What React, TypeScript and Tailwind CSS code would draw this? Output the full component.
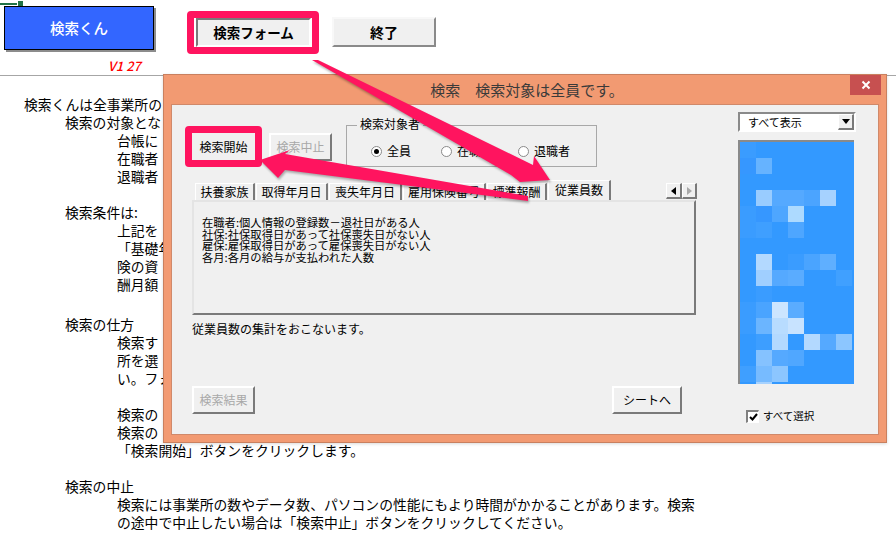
import React from "react";

const FONT = "[font-family:'Noto_Sans_CJK_JP','Liberation_Sans',sans-serif]";

const LINES: { t: string; i: number; top?: number }[] = [
  { t: "検索くんは全事業所の", i: 24 },
  { t: "検索の対象とな", i: 65 },
  { t: "台帳に", i: 117 },
  { t: "在職者", i: 117 },
  { t: "退職者", i: 117 },
  { t: "検索条件は:", i: 65, top: 18 },
  { t: "上記を", i: 117 },
  { t: "「基礎年", i: 117 },
  { t: "険の資", i: 117 },
  { t: "酬月額", i: 117 },
  { t: "検索の仕方", i: 65, top: 22 },
  { t: "検索す", i: 117 },
  { t: "所を選", i: 117 },
  { t: "い。フォ", i: 117 },
  { t: "検索の", i: 117, top: 18 },
  { t: "検索の", i: 117 },
  { t: "「検索開始」ボタンをクリックします。", i: 117 },
  { t: "検索の中止", i: 65, top: 18 },
  { t: "検索には事業所の数やデータ数、パソコンの性能にもより時間がかかることがあります。検索", i: 117 },
  { t: "の途中で中止したい場合は「検索中止」ボタンをクリックしてください。", i: 117 },
];

const B = "#3399ff";
const MOSAIC: string[][] = [
  ["#3a9cff", B, B, B, B, B, B],
  ["#3697ff", "#66b3ff", B, B, B, B, B],
  [B, B, B, B, B, B, B],
  [B, "#99ccff", "#55a9ff", "#55a9ff", "#4ba4ff", "#a6d2ff", B],
  ["#3a9cff", "#3697ff", "#4ea6ff", "#addaff", B, B, B],
  ["#3a9cff", "#3f9fff", B, "#4ea6ff", B, B, B],
  [B, B, B, B, B, B, B],
  [B, "#b3d9ff", B, "#3a9cff", "#4aa4ff", "#5fafff", B],
  [B, "#a0cfff", "#55a9ff", "#5aacff", B, B, "#40a0ff"],
  [B, "#3a9cff", B, B, B, B, B],
  ["#3a9cff", "#4aa4ff", "#cce5ff", "#5aacff", B, B, B],
  ["#3a9cff", "#6bb5ff", "#b8dcff", "#c8e3ff", B, B, B],
  [B, "#3d9eff", "#b3d9ff", B, "#b3d9ff", "#55a9ff", "#8cc6ff"],
  [B, "#85c2ff", "#55a9ff", "#50a7ff", B, B, B],
  ["#3f9fff", "#77bbff", "#8cc6ff", B, B, B, B],
];

const BTN =
  "flex items-center justify-center bg-[#f0f0f0] border-2 border-t-white border-l-white border-r-[#7a7a7a] border-b-[#7a7a7a] text-[12px] leading-none";

const TABS = [
  { t: "扶養家族", w: 60 },
  { t: "取得年月日", w: 72 },
  { t: "喪失年月日", w: 73 },
  { t: "雇用保険番号", w: 83 },
  { t: "標準報酬", w: 60 },
];

function Radio({ checked }: { checked?: boolean }) {
  return (
    <span className="flex h-[11px] w-[11px] items-center justify-center rounded-full border border-[#8a8a8a] bg-white">
      {checked && <span className="h-[5px] w-[5px] rounded-full bg-black" />}
    </span>
  );
}

export default function App() {
  return (
    <div className={`relative h-[533px] w-[896px] overflow-hidden bg-white text-black ${FONT}`}>
      {/* sheet cell selection marks */}
      <div className="flex h-[6px] items-start">
        <div className="mt-[3px] h-[2px] w-[17px] bg-[#217346]" />
        <div className="mt-[1px] ml-[1px] h-[5px] w-[5px] bg-[#217346]" />
      </div>

      {/* header */}
      <div className="flex h-[70px] items-start border-b border-[#a6a6a6] pl-[4px]">
        <div className="flex w-[150px] flex-col">
          <div className="flex h-[44px] items-center justify-center border border-black bg-[#3366ff] text-[14.5px] font-medium text-white shadow-[2px_2px_0_#8c8c8c]">
            検索くん
          </div>
          <div className="mt-[9px] pr-[13px] text-right text-[13px] leading-[14px] font-medium text-[#ff0000] italic">
            V1 27
          </div>
        </div>
        <div className="mt-[5px] ml-[33px] h-[43px] w-[132px] rounded-[4px] border-[7px] border-[#ff145f] bg-white">
          <div className="ml-[2px] flex h-[29px] w-[115px] items-center justify-center border-2 border-t-[#7a7a7a] border-r-[#ffffff] border-b-[#ffffff] border-l-[#7a7a7a] bg-[#f0f0f0] text-[13.5px] font-bold">
            検索フォーム
          </div>
        </div>
        <div className="mt-[11px] ml-[13px] flex h-[30px] w-[104px] items-center justify-center border-2 border-t-[#f8f8f8] border-r-[#8a8a8a] border-b-[#8a8a8a] border-l-[#f8f8f8] bg-[#f0f0f0] text-[14px] font-bold">
          終了
        </div>
      </div>

      {/* document text */}
      <div className="pt-[19px] text-[13.8px] leading-[18px]">
        {LINES.map((l, i) => (
          <div
            key={i}
            className={`whitespace-nowrap ${
              l.i === 24 ? "pl-[24px]" : l.i === 65 ? "pl-[65px]" : "pl-[117px]"
            } ${l.top === 18 ? "mt-[18px]" : l.top === 22 ? "mt-[22px]" : ""}`}
          >
            {l.t}
          </div>
        ))}
      </div>

      {/* dialog window */}
      <div className="absolute top-[74px] left-[163px] flex h-[369px] w-[724px] flex-col border border-[#c9805f] bg-[#f29a72] shadow-[0_1px_3px_rgba(0,0,0,0.15)]">
        <div className="flex h-[29px] shrink-0 items-start">
          <div className="flex h-[30px] flex-1 items-center justify-center pl-[40px] text-[15px] whitespace-pre text-[#3a3a3a]">
            検索　検索対象は全員です。
          </div>
          <div className="mr-[5px] flex h-[20px] w-[31px] items-center justify-center bg-[#c75050]">
            <svg width="10" height="10" viewBox="0 0 10 10">
              <path d="M1.5 1.5 L8.5 8.5 M8.5 1.5 L1.5 8.5" stroke="#fff" strokeWidth="2" />
            </svg>
          </div>
        </div>

        <div className="mx-[7px] flex h-[331px] border border-[#d0896a] bg-[#f0f0f0] text-[12px]">
          {/* left column */}
          <div className="ml-[13px] flex w-[511px] flex-col">
            <div className="mt-[20px] flex h-[43px] items-start">
              <div className="mt-[1px] flex h-[41px] w-[77px] items-center justify-center rounded-[4px] border-[7px] border-[#ff145f] bg-[#f0f0f0] text-[12px]">
                検索開始
              </div>
              <div className={`${BTN} mt-[8px] ml-[7px] h-[28px] w-[63px] text-[#a8a8a8]`}>検索中止</div>
              <div className="relative ml-[14px] flex h-[42px] w-[251px] items-end gap-[6px] border border-[#a8a8a8] pb-[8px] pl-[24px]">
                <div className="absolute -top-[9px] left-[10px] bg-[#f0f0f0] px-[3px] text-[12px] leading-[14px]">
                  検索対象者
                </div>
                <div className="flex w-[64px] items-center gap-[5px]">
                  <Radio checked />
                  <span className="leading-[14px]">全員</span>
                </div>
                <div className="flex w-[71px] items-center gap-[5px]">
                  <Radio />
                  <span className="leading-[14px]">在職者</span>
                </div>
                <div className="flex items-center gap-[5px]">
                  <Radio />
                  <span className="leading-[14px]">退職者</span>
                </div>
              </div>
            </div>

            {/* tab strip */}
            <div className="mt-[12px] flex h-[20px] items-end pl-[10px]">
              {TABS.map((x, i) => (
                <div
                  key={i}
                  style={{ width: x.w }}
                  className="mr-[1px] flex h-[17px] shrink-0 items-center justify-center border-t border-r-2 border-l border-t-white border-r-[#7a7a7a] border-l-white text-[12px] leading-none whitespace-nowrap"
                >
                  {x.t}
                </div>
              ))}
              <div className="flex h-[20px] w-[63px] shrink-0 items-center justify-center border-t border-r-2 border-l border-t-white border-r-[#7a7a7a] border-l-white pb-[2px] text-[12px] leading-none">
                従業員数
              </div>
              <div className="mb-[1px] ml-[55px] flex h-[16px] w-[31px] shrink-0">
                <div className="flex w-[16px] items-center justify-center border border-r-2 border-b-2 border-white border-r-[#7a7a7a] border-b-[#7a7a7a] bg-[#f0f0f0]">
                  <svg width="6" height="8" viewBox="0 0 6 8">
                    <path d="M5 0 L0 4 L5 8 Z" fill="#000" />
                  </svg>
                </div>
                <div className="flex w-[15px] items-center justify-center border border-r-2 border-b-2 border-white border-r-[#7a7a7a] border-b-[#7a7a7a] bg-[#f0f0f0]">
                  <svg width="6" height="8" viewBox="0 0 6 8">
                    <path d="M1 0 L6 4 L1 8 Z" fill="#a8a8a8" />
                  </svg>
                </div>
              </div>
            </div>

            {/* tab panel */}
            <div className="ml-[7px] h-[115px] w-[504px] border-2 border-t-[#e4e4e4] border-r-[#7a7a7a] border-b-[#7a7a7a] border-l-[#e4e4e4] pt-[15px] pl-[8px] text-[11.3px] leading-[11.7px]">
              <div>在職者:個人情報の登録数－退社日がある人</div>
              <div>社保:社保取得日があって社保喪失日がない人</div>
              <div>雇保:雇保取得日があって雇保喪失日がない人</div>
              <div>各月:各月の給与が支払われた人数</div>
            </div>
            <div className="mt-[7px] ml-[7px] text-[12px] leading-[14px]">従業員数の集計をおこないます。</div>

            <div className="mt-[50px] ml-[7px] flex w-[490px] justify-between">
              <div className={`${BTN} h-[28px] w-[63px] text-[#a8a8a8]`}>検索結果</div>
              <div className={`${BTN} h-[28px] w-[70px] text-[11px]`}>シートへ</div>
            </div>
          </div>

          {/* right column */}
          <div className="mt-[7px] ml-[42px] flex w-[118px] flex-col">
            <div className="flex h-[20px] border-2 border-t-[#8a8a8a] border-r-white border-b-white border-l-[#8a8a8a] bg-white">
              <div className="flex-1 pl-[8px] text-[11px] leading-[16px]">すべて表示</div>
              <div className="flex w-[16px] items-center justify-center border border-r-2 border-b-2 border-white border-r-[#7a7a7a] border-b-[#7a7a7a] bg-[#f0f0f0]">
                <svg width="8" height="5" viewBox="0 0 8 5">
                  <path d="M0 0 L8 0 L4 5 Z" fill="#000" />
                </svg>
              </div>
            </div>
            <div className="mt-[8px] h-[244px] w-[116px] overflow-hidden border-t-2 border-l-2 border-t-[#8a8a8a] border-l-[#8a8a8a] bg-[#3399ff]">
              {MOSAIC.map((row, r) => (
                <div key={r} className="flex h-[16px]">
                  {row.map((c, k) => (
                    <div key={k} className="h-[16px] w-[16px] shrink-0" style={{ backgroundColor: c }} />
                  ))}
                </div>
              ))}
              <div className="ml-[16px] h-[2px] w-[16px] bg-[#a6d2ff]" />
            </div>
            <div className="mt-[25px] ml-[8px] flex items-center gap-[4px]">
              <div className="flex h-[13px] w-[13px] items-center justify-center border-t-2 border-r border-b border-l-2 border-t-[#808080] border-r-white border-b-white border-l-[#808080] bg-white">
                <svg width="9" height="8" viewBox="0 0 9 8">
                  <path d="M1 4 L3.5 6.5 L8 1" stroke="#000" strokeWidth="2" fill="none" />
                </svg>
              </div>
              <span className="text-[10.5px] leading-[14px]">すべて選択</span>
            </div>
          </div>
        </div>
      </div>

      {/* annotation arrows */}
      <svg
        className="pointer-events-none absolute top-0 left-0 drop-shadow-[1px_2px_1px_rgba(0,0,0,0.3)]"
        width="896"
        height="533"
        viewBox="0 0 896 533"
      >
        <polygon points="312,60 318,60 533,165 534,156 550,180 520,182 511,175" fill="#ff145f" />
        <polygon points="528,196 528,201 285,170 278,178 260,160 290,150 285,154" fill="#ff145f" />
      </svg>
    </div>
  );
}
